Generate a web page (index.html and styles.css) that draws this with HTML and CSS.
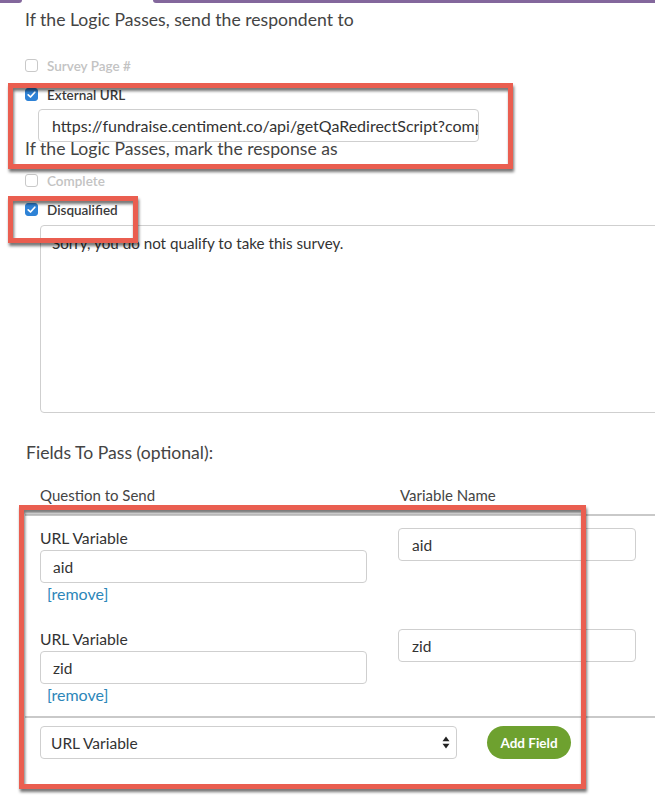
FILE: index.html
```html
<!DOCTYPE html>
<html>
<head>
<meta charset="utf-8">
<link rel="stylesheet" href="styles.css">
</head>
<body>
<div class="tabs"><span class="tab tab-left"></span><span class="tab tab-right"></span></div>
<main class="page">
  <h2 class="heading first">If the Logic Passes, send the respondent to</h2>
  <div class="check muted"><span class="box"></span><span>Survey Page #</span></div>
  <div class="check"><span class="box on"><svg viewBox="0 0 13 13" width="13" height="13"><polyline points="3.2,6.8 5.5,9 9.8,4.2" fill="none" stroke="#fff" stroke-width="1.7" stroke-linecap="round" stroke-linejoin="round"/></svg></span><span>External URL</span></div>
  <div class="input url">https://fundraise.centiment.co/api/getQaRedirectScript?comp</div>

  <h2 class="heading second">If the Logic Passes, mark the response as</h2>
  <div class="check muted mark-first"><span class="box"></span><span>Complete</span></div>
  <div class="check"><span class="box on"><svg viewBox="0 0 13 13" width="13" height="13"><polyline points="3.2,6.8 5.5,9 9.8,4.2" fill="none" stroke="#fff" stroke-width="1.7" stroke-linecap="round" stroke-linejoin="round"/></svg></span><span>Disqualified</span></div>
  <div class="textarea">Sorry, you do not qualify to take this survey.</div>

  <h3 class="subheading">Fields To Pass (optional):</h3>
  <section class="fields">
    <div class="fields-head">
      <div>Question to Send</div>
      <div>Variable Name</div>
    </div>
    <div class="fields-body">
      <div class="field-row">
        <div class="q-col">
          <div class="q-label">URL Variable</div>
          <div class="input q-input">aid</div>
          <a class="remove">[remove]</a>
        </div>
        <div class="input v-input">aid</div>
      </div>
      <div class="field-row">
        <div class="q-col">
          <div class="q-label">URL Variable</div>
          <div class="input q-input">zid</div>
          <a class="remove">[remove]</a>
        </div>
        <div class="input v-input">zid</div>
      </div>
    </div>
    <div class="fields-foot">
      <div class="select"><span>URL Variable</span><svg class="arrows" viewBox="0 0 8 13" width="8" height="13"><polygon points="4,0.5 7.5,5.2 0.5,5.2" fill="#222"/><polygon points="0.5,7.8 7.5,7.8 4,12.5" fill="#222"/></svg></div>
      <button class="add-btn">Add Field</button>
    </div>
  </section>

  <div class="mark mark-1"></div>
  <div class="mark mark-2"></div>
  <div class="mark mark-3"></div>
</main>
</body>
</html>
```

FILE: styles.css
```css
* { box-sizing: border-box; }
html, body { margin: 0; padding: 0; background: #fff; }
body {
  font-family: Lato, "Open Sans", "Liberation Sans", sans-serif;
  color: #444;
  width: 655px;
  height: 799px;
  overflow: hidden;
}
.tabs { height: 3px; display: flex; justify-content: space-between; }
.tab { display: block; height: 3px; background: #83679c; }
.tab-left { width: 22px; border-bottom-right-radius: 3px; }
.tab-right { width: 502px; border-bottom-left-radius: 3px; }

.page { position: relative; }

.heading {
  margin: 0 0 0 25px;
  font-size: 17.6px;
  font-weight: 400;
  color: #444;
  white-space: nowrap;
}
.heading.first { margin-top: 6px; line-height: 22px; margin-bottom: 20px; }
.heading.second { margin-top: -2px; line-height: 18px; margin-bottom: 8px; }

.check {
  height: 29px;
  display: flex;
  align-items: center;
  margin-left: 25px;
  font-size: 13.5px;
  font-weight: 600;
  color: #3a3a3a;
}
.check.muted { color: #c3c3c3; }
.box {
  width: 13px;
  height: 13px;
  border: 1px solid #c9c9c9;
  border-radius: 3px;
  background: #fff;
  margin-right: 9px;
  display: flex;
}
.box.on { background: #2e82d6; border-color: #2e82d6; }
.box.on svg { margin: -1px; }

.input {
  border: 1px solid #cfcfcf;
  border-radius: 4px;
  height: 33px;
  display: flex;
  align-items: center;
  font-size: 15.5px;
  color: #333;
  white-space: nowrap;
  overflow: hidden;
  background: #fff;
}
.url { margin-left: 38px; width: 441px; padding-left: 13px; font-size: 16px; }

.textarea {
  margin: 1px 0 0 40px;
  width: 640px;
  height: 188px;
  border: 1px solid #cfcfcf;
  border-radius: 4px;
  padding: 7px 11px;
  font-size: 15.2px;
  line-height: 20px;
  color: #333;
}

.subheading {
  margin: 30px 0 0 26px;
  font-size: 17.6px;
  line-height: 20px;
  font-weight: 400;
  color: #444;
}

.fields { margin: 22px 0 0 25px; }
.fields-head {
  display: grid;
  grid-template-columns: 360px 1fr;
  padding: 0 0 9px 15px;
  font-size: 15px;
  line-height: 20px;
  color: #444;
  border-bottom: 2px solid #c9c9c9;
}
.fields-body {
  padding: 12px 0 12px 15px;
  display: flex;
  flex-direction: column;
  gap: 26px;
  border-bottom: 2px solid #c9c9c9;
}
.field-row { display: grid; grid-template-columns: 358px 238px; align-items: start; }
.q-label { font-size: 15.7px; line-height: 20px; color: #333; margin-bottom: 2px; }
.q-input { width: 327px; padding-left: 12px; }
.v-input { width: 238px; padding-left: 13px; }
.remove {
  display: block;
  margin: 2px 0 0 7px;
  font-size: 16px;
  line-height: 18px;
  color: #2c86b9;
}

.fields-foot {
  padding: 8px 0 0 15px;
  display: flex;
  align-items: center;
  gap: 30px;
}
.select {
  width: 417px;
  height: 33px;
  border: 1px solid #cfcfcf;
  border-radius: 4px;
  display: flex;
  align-items: center;
  justify-content: space-between;
  padding: 0 6px 0 10px;
  font-size: 15.5px;
  color: #333;
}
.add-btn {
  width: 84px;
  height: 33px;
  border: none;
  border-radius: 17px;
  background: #6ea12f;
  color: #fff;
  font-family: Lato, "Open Sans", sans-serif;
  font-weight: 700;
  font-size: 13.5px;
  padding: 0;
}

.mark {
  position: absolute;
  border: 5px solid #ea5e50;
  filter: drop-shadow(1px 3px 1.5px rgba(0, 0, 0, 0.55));
}
.mark-1 { left: 8px; top: 74px; width: 505px; height: 86px; }
.mark-2 { left: 8px; top: 187px; width: 130px; height: 47px; }
.mark-3 { left: 19px; top: 496px; width: 567px; height: 284px; }
```
